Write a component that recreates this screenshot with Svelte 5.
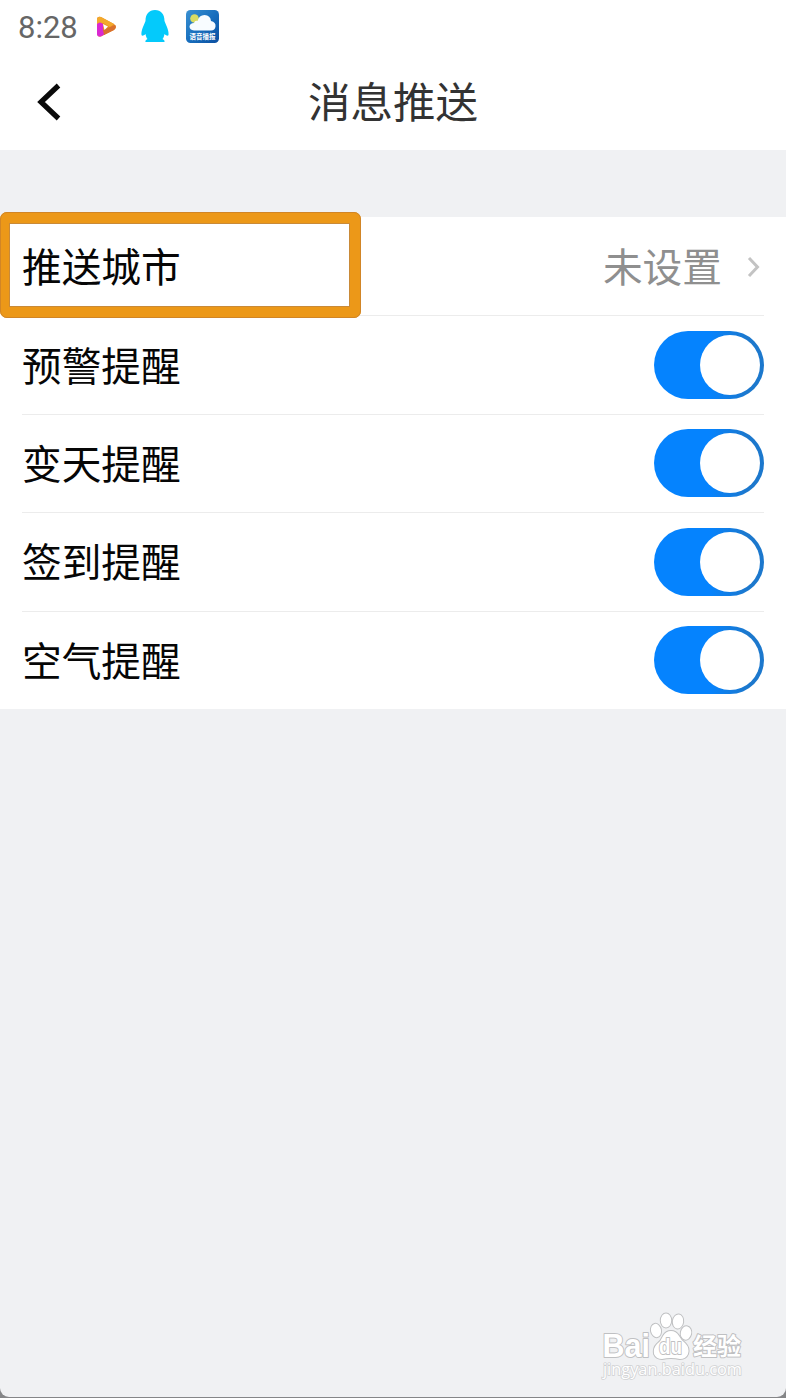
<script lang="ts">
	const reminders = $state([
		{ id: 'warning', label: '预警提醒', on: true },
		{ id: 'change', label: '变天提醒', on: true },
		{ id: 'signin', label: '签到提醒', on: true },
		{ id: 'air', label: '空气提醒', on: true }
	]);
</script>

<div class="screen">
	<div class="status-bar">
		<span class="time">8:28</span>
		<svg class="video" viewBox="0 0 20 22" aria-hidden="true">
			<path d="M0 3Q0 0 4 1L17 8Q21 11 17 14L5 20Q1 22 0 18Z" fill="#e98d25" />
			<path d="M0 3Q1 0 4 1L17 8L13 11L6 7L0 9Z" fill="#f3a92c" />
			<path d="M0 8Q3 5 6 8V13L8 18L4 20.500Q0 21 0 18Z" fill="#d928d2" />
			<path d="M6 14L18 9Q20 11 17 14L7 19Z" fill="#d9702e" />
			<path d="M6 8L11 10.500L7.500 14Z" fill="#fff" />
		</svg>
		<svg class="penguin" viewBox="0 0 28 34" aria-hidden="true">
			<path
				d="M14 1C8 1 4.500 5 4.500 12C2 18 0 22 .5 26C1 27.500 3 26.500 4.500 25C5 27.500 5.500 29 6.500 30C4 31 4 33 5 33H23C24 33 24 31 21.500 30C22.500 29 23 27.500 23.500 25C25 26.500 27 27.500 27.500 26C28 22 26 18 23.500 12C23.500 5 20 1 14 1Z"
				fill="#04cafb"
			/>
		</svg>
		<svg class="weather" viewBox="0 0 33 33" aria-hidden="true">
			<defs>
				<linearGradient id="sky" x1="0" y1="0" x2="1" y2="1">
					<stop offset="0" stop-color="#3a91d2" />
					<stop offset="0.5" stop-color="#186fbe" />
					<stop offset="1" stop-color="#0c4fa0" />
				</linearGradient>
			</defs>
			<rect width="33" height="33" rx="4.500" fill="url(#sky)" />
			<circle cx="8.500" cy="8.500" r="4.300" fill="#d9dc63" />
			<path
				d="M8 20.500Q3.500 20 3.500 16.500Q4 13 8 13Q9 10 11.500 11Q13 5 18.500 5Q24.500 5.500 25 11Q30 12 29.500 16.500Q29 20.500 25 20.500Z"
				fill="#f8fcff"
			/>
			<text x="16.500" y="28.500" text-anchor="middle" textLength="26">语音播报</text>
		</svg>
	</div>

	<header>
		<button class="back" aria-label="返回">
			<svg viewBox="0 0 24 38" aria-hidden="true">
				<path d="M21.500 2.500L4 19L21.500 35.500" fill="none" stroke="#0a0a0a" stroke-width="5.200" />
			</svg>
		</button>
		<h1>消息推送</h1>
	</header>

	<ul class="settings">
		<li class="city">
			<span class="label">推送城市</span>
			<span class="label value">未设置</span>
			<svg class="chevron" viewBox="0 0 14 22" aria-hidden="true">
				<path d="M2 2L10.500 11L2 20" fill="none" stroke="#c3c3c3" stroke-width="3" />
			</svg>
			<div class="highlight"></div>
		</li>
		{#each reminders as item (item.id)}
			<li>
				<span class="label">{item.label}</span>
				<button
					class="switch"
					class:on={item.on}
					role="switch"
					aria-checked={item.on}
					aria-label={item.label}
					onclick={() => (item.on = !item.on)}
				>
					<span class="knob"></span>
				</button>
			</li>
		{/each}
	</ul>

	<div class="watermark">
		<svg viewBox="0 0 150 72" aria-hidden="true">
			<g fill="#fff" stroke="#bfc0c2" stroke-width="2" paint-order="stroke" stroke-linejoin="round">
				<text class="brand" x="2.500" y="48.500" textLength="47.500" lengthAdjust="spacingAndGlyphs">Bai</text>
				<ellipse cx="56" cy="22.500" rx="5" ry="6.700" transform="rotate(-12 56 22.500)" />
				<ellipse cx="66" cy="12.500" rx="5.200" ry="7" />
				<ellipse cx="78" cy="13.500" rx="5.200" ry="7" transform="rotate(8 78 13.500)" />
				<ellipse cx="86" cy="25" rx="5.200" ry="6.700" transform="rotate(12 86 25)" />
				<path d="M71 23Q76 23 79 28Q81 32 85 35Q90 40 88 46Q86 51 80 51Q71 49 62 51Q56 51 54 46Q53 40 57 36Q61 33 63 28Q66 23 71 23Z" />
				<text class="cjk" x="93" y="47" textLength="48">经验</text>
				<text class="du" x="59" y="46" textLength="23" lengthAdjust="spacingAndGlyphs">du</text>
			</g>
			<text class="url" x="3" y="67" textLength="139" lengthAdjust="spacingAndGlyphs">jingyan.baidu.com</text>
		</svg>
	</div>
</div>

<style>
	:global(body) {
		background: #858688;
	}

	.screen {
		position: relative;
		box-sizing: border-box;
		height: 1397px;
		overflow: hidden;
		border-radius: 0 0 9px 9px;
		background: #f0f1f3;
		font-family: Roboto, 'Noto Sans CJK SC', sans-serif;
	}

	.status-bar {
		display: flex;
		align-items: flex-start;
		height: 54px;
		background: #fff;
	}

	.time {
		width: 78px;
		padding: 10px 0 0 18px;
		font-size: 31px;
		line-height: 36px;
		color: #666;
	}

	.video {
		width: 20px;
		height: 22px;
		margin: 16px 0 0 1px;
	}

	.penguin {
		width: 28px;
		height: 34px;
		margin: 9px 0 0 24px;
	}

	.weather {
		width: 33px;
		height: 33px;
		margin: 10px 0 0 17px;
	}

	.weather text {
		font-family: 'Noto Sans CJK SC', sans-serif;
		font-size: 6.5px;
		font-weight: 700;
		fill: #fff;
	}

	header {
		display: grid;
		grid-template-columns: 100px 1fr 100px;
		align-items: center;
		height: 96px;
		background: #fff;
	}

	button {
		padding: 0;
		border: 0;
		background: none;
	}

	.back {
		display: flex;
		margin-left: 37px;
	}

	.back svg {
		width: 24px;
		height: 38px;
	}

	h1 {
		margin: 0;
		padding-top: 3px;
		font-size: 42.5px;
		line-height: 60px;
		font-weight: 400;
		text-align: center;
		color: #333;
	}

	.settings {
		margin: 67px 0 0;
		padding: 0 22px;
		list-style: none;
		background: #fff;
	}

	li {
		display: flex;
		align-items: center;
		justify-content: space-between;
		box-sizing: border-box;
		height: 98.4px;
		font-size: 39.7px;
		line-height: 58px;
		color: #060606;
	}

	li + li {
		border-top: 1px solid #ececec;
	}

	.city {
		position: relative;
		z-index: 1;
	}

	.label {
		padding-top: 5px;
	}

	.value {
		margin-left: auto;
		color: #8f8f8f;
	}

	.chevron {
		width: 14px;
		height: 22px;
		margin: 1px 3px 0 25px;
	}

	/* marker frame drawn over the first row */
	.highlight {
		position: absolute;
		top: -5px;
		left: -22px;
		box-sizing: border-box;
		width: 361px;
		height: 106px;
		border: solid #ec9818;
		border-width: 11px 11px 11px 9px;
		border-radius: 7px;
		box-shadow: inset 0 0 0 1px #c98a38;
		outline: 1px solid #d18526;
		outline-offset: -1px;
	}

	.switch {
		display: flex;
		align-items: center;
		box-sizing: border-box;
		width: 110px;
		height: 68px;
		padding: 0 4px;
		border-radius: 34px;
		background: #c8c8c8;
	}

	.switch.on {
		justify-content: flex-end;
		background: linear-gradient(90deg, #0583fe 50%, #1c78cd 85%);
	}

	.knob {
		width: 60px;
		height: 60px;
		border-radius: 50%;
		background: #fff;
	}

	.watermark {
		position: absolute;
		left: 600px;
		top: 1308px;
	}

	.watermark svg {
		display: block;
		width: 150px;
		height: 72px;
	}

	.brand,
	.du {
		font-family: 'Liberation Sans', sans-serif;
		font-weight: 700;
		font-size: 33px;
	}

	.du {
		font-size: 22px;
	}

	.cjk {
		font-family: 'Noto Sans CJK SC', sans-serif;
		font-size: 24px;
		font-weight: 700;
	}

	.url {
		font-family: 'Open Sans', sans-serif;
		font-size: 16px;
		fill: #fff;
		stroke: #d0d1d3;
		stroke-width: 1.6px;
		paint-order: stroke;
	}
</style>
